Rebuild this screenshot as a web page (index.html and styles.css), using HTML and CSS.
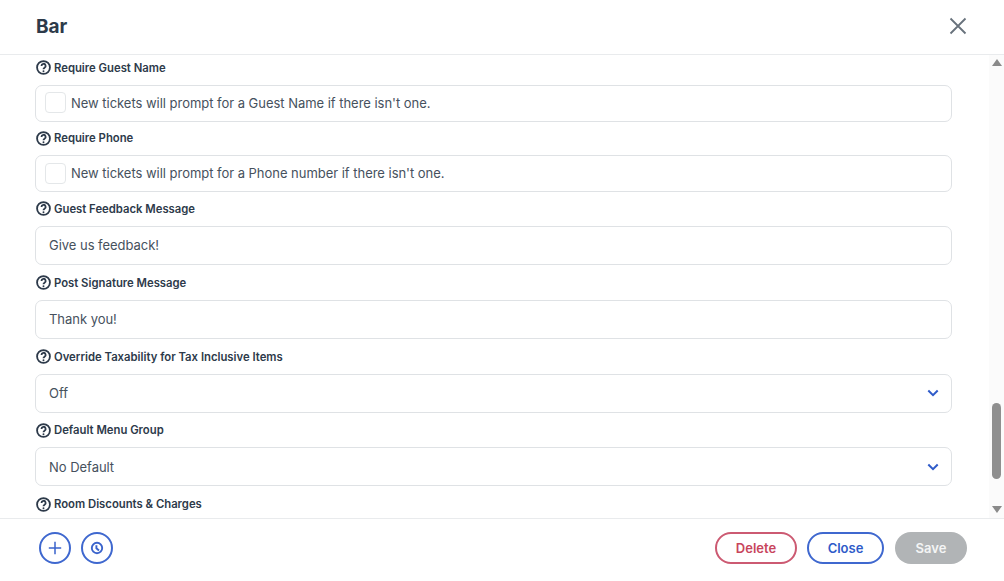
FILE: index.html
```html
<!DOCTYPE html>
<html lang="en">
<head>
    <meta charset="UTF-8">
    <title>Bar</title>
    <link rel="stylesheet" href="styles.css">
</head>
<body>
    <div class="dialog">
        <!-- Header -->
        <header class="dialog-header">
            <h1>Bar</h1>
            <button class="close-x" aria-label="Close">
                <svg width="18" height="18" viewBox="0 0 18 18"><path d="M1.5 1.5 16.5 16.5M16.5 1.5 1.5 16.5"/></svg>
            </button>
        </header>

        <!-- Form -->
        <div class="dialog-body">
            <div class="form">
                <div class="field">
                    <label class="field-label"><svg class="help" viewBox="0 0 14 14"><circle cx="7" cy="7" r="6"/><path d="M5.1 5.5a1.95 1.95 0 1 1 2.9 1.7c-.7.4-1 .8-1 1.5"/><circle class="dot" cx="7" cy="10.5" r=".9"/></svg>Require Guest Name</label>
                    <div class="box check-box"><span class="checkbox"></span>New tickets will prompt for a Guest Name if there isn't one.</div>
                </div>
                <div class="field">
                    <label class="field-label"><svg class="help" viewBox="0 0 14 14"><circle cx="7" cy="7" r="6"/><path d="M5.1 5.5a1.95 1.95 0 1 1 2.9 1.7c-.7.4-1 .8-1 1.5"/><circle class="dot" cx="7" cy="10.5" r=".9"/></svg>Require Phone</label>
                    <div class="box check-box"><span class="checkbox"></span>New tickets will prompt for a Phone number if there isn't one.</div>
                </div>
                <div class="field">
                    <label class="field-label"><svg class="help" viewBox="0 0 14 14"><circle cx="7" cy="7" r="6"/><path d="M5.1 5.5a1.95 1.95 0 1 1 2.9 1.7c-.7.4-1 .8-1 1.5"/><circle class="dot" cx="7" cy="10.5" r=".9"/></svg>Guest Feedback Message</label>
                    <div class="box input-box">Give us feedback!</div>
                </div>
                <div class="field">
                    <label class="field-label"><svg class="help" viewBox="0 0 14 14"><circle cx="7" cy="7" r="6"/><path d="M5.1 5.5a1.95 1.95 0 1 1 2.9 1.7c-.7.4-1 .8-1 1.5"/><circle class="dot" cx="7" cy="10.5" r=".9"/></svg>Post Signature Message</label>
                    <div class="box input-box">Thank you!</div>
                </div>
                <div class="field">
                    <label class="field-label"><svg class="help" viewBox="0 0 14 14"><circle cx="7" cy="7" r="6"/><path d="M5.1 5.5a1.95 1.95 0 1 1 2.9 1.7c-.7.4-1 .8-1 1.5"/><circle class="dot" cx="7" cy="10.5" r=".9"/></svg>Override Taxability for Tax Inclusive Items</label>
                    <div class="box input-box select-box">Off<svg class="chevron" viewBox="0 0 12 8"><path d="M1.3 1.5 6 6.2 10.7 1.5"/></svg></div>
                </div>
                <div class="field">
                    <label class="field-label"><svg class="help" viewBox="0 0 14 14"><circle cx="7" cy="7" r="6"/><path d="M5.1 5.5a1.95 1.95 0 1 1 2.9 1.7c-.7.4-1 .8-1 1.5"/><circle class="dot" cx="7" cy="10.5" r=".9"/></svg>Default Menu Group</label>
                    <div class="box input-box select-box">No Default<svg class="chevron" viewBox="0 0 12 8"><path d="M1.3 1.5 6 6.2 10.7 1.5"/></svg></div>
                </div>
                <div class="field">
                    <label class="field-label"><svg class="help" viewBox="0 0 14 14"><circle cx="7" cy="7" r="6"/><path d="M5.1 5.5a1.95 1.95 0 1 1 2.9 1.7c-.7.4-1 .8-1 1.5"/><circle class="dot" cx="7" cy="10.5" r=".9"/></svg>Room Discounts &amp; Charges</label>
                </div>
            </div>

            <!-- Scrollbar -->
            <div class="scrollbar">
                <span class="arrow-up"></span>
                <span class="thumb"></span>
                <span class="arrow-down"></span>
            </div>
        </div>

        <!-- Footer -->
        <footer class="dialog-footer">
            <div class="footer-left">
                <button class="round-btn" aria-label="Add">
                    <svg width="14" height="14" viewBox="0 0 14 14"><path d="M7 .8V13.2M.8 7H13.2"/></svg>
                </button>
                <button class="round-btn" aria-label="History">
                    <svg class="clock" width="14" height="14" viewBox="0 0 14 14"><circle cx="7" cy="7" r="5.2"/><path d="M6.4 4.2V7.2L9 9.4"/></svg>
                </button>
            </div>
            <div class="footer-right">
                <button class="btn btn-delete">Delete</button>
                <button class="btn btn-close">Close</button>
                <button class="btn btn-save">Save</button>
            </div>
        </footer>
    </div>
</body>
</html>
```

FILE: styles.css
```css
* {
    box-sizing: border-box;
}

body {
    margin: 0;
    font-family: Inter, "Liberation Sans", sans-serif;
    background-color: #ffffff;
    color: #46515d;
}

.dialog {
    display: flex;
    flex-direction: column;
    height: 581px;
    overflow: hidden;
}

.dialog-header {
    display: flex;
    align-items: center;
    justify-content: space-between;
    height: 55px;
    padding: 0 36px 2px;
    border-bottom: 1px solid #e9ebed;
}

.dialog-header h1 {
    margin: 0;
    font-size: 19px;
    font-weight: 700;
    color: #2d3a4a;
}

.close-x {
    display: flex;
    padding: 0;
    margin: 0 1px 1px 0;
    border: none;
    background: none;
}

.close-x path {
    fill: none;
    stroke: #68727c;
    stroke-width: 1.8;
}

.dialog-body {
    display: flex;
    flex: 1;
    min-height: 0;
    overflow: hidden;
}

.form {
    flex: 1;
    padding: 4.4px 37px 0 35px;
    overflow: hidden;
}

.field {
    margin-bottom: 8px;
}

.field-label {
    display: flex;
    align-items: center;
    gap: 3.5px;
    height: 17px;
    margin-bottom: 8.5px;
    padding-left: 0.5px;
    font-size: 11.3px;
    font-weight: 600;
    color: #2d3a4a;
}

.help {
    width: 15px;
    height: 15px;
    flex-shrink: 0;
}

.help circle,
.help path {
    fill: none;
    stroke: #2d3a4a;
    stroke-width: 1.7;
}

.help .dot {
    fill: #2d3a4a;
    stroke: none;
}

.box {
    display: flex;
    align-items: center;
    border: 1px solid #dfe2e5;
    border-radius: 7px;
    font-size: 13px;
    letter-spacing: -0.03px;
    color: #46515d;
}

.check-box {
    height: 37px;
    padding: 0 0 1px 9px;
}

.input-box {
    height: 39px;
    margin-bottom: 9.35px;
    padding: 0 13px;
}

.select-box {
    justify-content: space-between;
}

.checkbox {
    width: 21px;
    height: 21px;
    margin-right: 5px;
    border: 1px solid #e4e7e9;
    border-radius: 4px;
}

.chevron {
    width: 12px;
    height: 8px;
    margin-right: -1px;
}

.chevron path {
    fill: none;
    stroke: #2f5bc9;
    stroke-width: 2;
}

.scrollbar {
    display: flex;
    flex-direction: column;
    align-items: center;
    width: 15px;
    padding-top: 4px;
    padding-bottom: 5px;
    background-color: #fbfbfb;
}

.arrow-up {
    width: 0;
    height: 0;
    border-left: 5px solid transparent;
    border-right: 5px solid transparent;
    border-bottom: 7px solid #8a8a8a;
}

.arrow-down {
    width: 0;
    height: 0;
    border-left: 5px solid transparent;
    border-right: 5px solid transparent;
    border-top: 7px solid #8a8a8a;
}

.thumb {
    width: 9px;
    height: 76px;
    margin-top: auto;
    margin-bottom: 27px;
    border-radius: 5px;
    background-color: #8f8f8f;
}

.dialog-footer {
    display: flex;
    align-items: center;
    justify-content: space-between;
    height: 63px;
    padding: 0 37px 5px 39px;
    border-top: 1px solid #e9ebed;
}

.footer-left,
.footer-right {
    display: flex;
    align-items: center;
    gap: 10px;
}

.round-btn {
    display: flex;
    align-items: center;
    justify-content: center;
    width: 32px;
    height: 32px;
    padding: 0;
    border: 2px solid #3f68cf;
    border-radius: 50%;
    background: #ffffff;
}

.round-btn path,
.round-btn circle {
    fill: none;
    stroke: #3a63cc;
    stroke-width: 1.5;
}

.round-btn .clock circle,
.round-btn .clock path {
    stroke-width: 1.9;
}

.btn {
    height: 32px;
    border-radius: 16px;
    padding: 0;
    font-family: inherit;
    font-size: 13px;
    font-weight: 600;
    background: #ffffff;
}

.btn-delete {
    width: 82px;
    border: 2px solid #cc5a72;
    color: #c8455c;
}

.btn-close {
    width: 77px;
    border: 2px solid #3f68cf;
    color: #2f5bc9;
}

.btn-save {
    width: 72px;
    margin-left: 1px;
    border: none;
    background-color: #b1b4b6;
    color: #f4f5f5;
}
```
